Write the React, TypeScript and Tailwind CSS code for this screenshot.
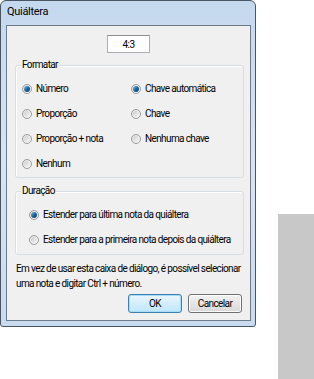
import React from "react";

type RadioProps = { label: string; checked?: boolean };

function Radio({ label, checked }: RadioProps) {
  return (
    <div className="flex items-center gap-[4px] h-[11px]">
      <span className="flex items-center justify-center w-[10px] h-[10px] rounded-full border border-[#9a9b9c] bg-gradient-to-br from-[#e2e2e2] to-[#fbfbfb] shrink-0">
        <span className="w-[6px] h-[6px] rounded-full bg-gradient-to-br from-[#cfcfcf] to-[#f4f4f4] flex items-center justify-center">
          {checked && (
            <span className="w-[6px] h-[6px] rounded-full bg-gradient-to-br from-[#7cc6ee] via-[#1d68a0] to-[#0b3a62]" />
          )}
        </span>
      </span>
      <span className="leading-none whitespace-nowrap">{label}</span>
    </div>
  );
}

function GroupBox({
  title,
  className,
  children,
}: {
  title: string;
  className?: string;
  children: React.ReactNode;
}) {
  return (
    <div
      className={`relative border border-[#d5dfe5] rounded-[3px] shadow-[inset_1px_1px_0_#ffffff] ${className ?? ""}`}
    >
      <span className="absolute left-[5px] -top-[6px] bg-[#f0f0f0] px-[1px] leading-[10px]">
        {title}
      </span>
      {children}
    </div>
  );
}

export default function App() {
  return (
    <div
      className="flex items-start w-[314px] h-[379px] bg-white text-[10px] tracking-[-0.62px] text-black"
      style={{ fontFamily: "Roboto, 'Liberation Sans', sans-serif" }}
    >
      {/* ── Window frame ───────────────────────────────── */}
      <div className="flex flex-col w-[256px] h-[327px] rounded-t-[6px] rounded-b-[3px] border border-[#4a5563] bg-gradient-to-b from-[#c4d8ee] via-[#d6e5f4] to-[#c9dbef] pl-[5px] pr-[4px] pb-[5px]">
        <div className="h-[24px] flex items-center pl-[1px] text-[11px] tracking-[-0.3px] pb-[1px]">
          Quiáltera
        </div>

        {/* Client area */}
        <div className="flex-1 flex flex-col border border-[#6e7b8b] bg-[#f0f0f0] pl-[8px] pr-[6px]">
          <div className="mt-[9px] ml-[92px] w-[43px] h-[18px] border border-[#abadb3] border-t-[#8e8f8f] bg-white flex items-center justify-center">
            4:3
          </div>

          <GroupBox title="Formatar" className="mt-[12px] h-[113px] pt-[17px] pl-[6px]">
            <div className="grid grid-cols-[109px_1fr] gap-y-[14px]">
              <Radio label="Número" checked />
              <Radio label="Chave automática" checked />
              <Radio label="Proporção" />
              <Radio label="Chave" />
              <Radio label="Proporção + nota" />
              <Radio label="Nenhuma chave" />
              <Radio label="Nenhum" />
            </div>
          </GroupBox>

          <GroupBox title="Duração" className="mt-[13px] h-[64px] pt-[17px] pl-[13px]">
            <div className="flex flex-col gap-[14px]">
              <Radio label="Estender para última nota da quiáltera" checked />
              <Radio label="Estender para a primeira nota depois da quiáltera" />
            </div>
          </GroupBox>

          <p className="mt-[6px] ml-[1px] leading-[15px] whitespace-nowrap">
            Em vez de usar esta caixa de diálogo, é possível selecionar
            <br />
            uma nota e digitar Ctrl + número.
          </p>

          <div className="flex justify-end gap-[6px] mt-[3px] pr-[2px]">
            <button className="w-[54px] h-[19px] rounded-[3px] border border-[#3c7fb1] bg-gradient-to-b from-[#eaf6fd] to-[#bee6fd] shadow-[inset_0_0_0_1px_#a7dcf8] leading-none">
              OK
            </button>
            <button className="w-[54px] h-[19px] rounded-[3px] border border-[#707070] bg-gradient-to-b from-[#f2f2f2] to-[#d8d8d8] shadow-[inset_0_0_0_1px_#fcfcfc] leading-none">
              Cancelar
            </button>
          </div>
        </div>
      </div>

      {/* ── Side block ─────────────────────────────────── */}
      <div className="ml-[22px] mt-[214px] w-[36px] h-[165px] bg-[#c8c8c8]" />
    </div>
  );
}
